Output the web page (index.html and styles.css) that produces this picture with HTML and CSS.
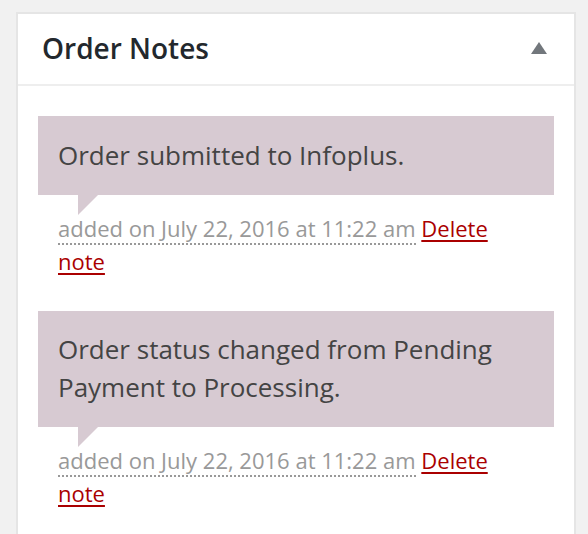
FILE: index.html
```html
<!DOCTYPE html>
<html lang="en">
<head>
<meta charset="utf-8">
<title>Order Notes</title>
<link rel="stylesheet" href="styles.css">
</head>
<body>
<div class="postbox">
  <div class="postbox-header">
    <h2 class="hndle">Order Notes</h2>
    <span class="toggle-indicator" aria-hidden="true">
      <svg width="16" height="12" viewBox="0 0 16 12"><polygon points="8,0 16,12 0,12" fill="#72777c"/></svg>
    </span>
  </div>
  <div class="inside">
    <ul class="order-notes">
      <li class="note">
        <div class="note-content"><p>Order submitted to Infoplus.</p></div>
        <p class="meta"><abbr class="exact-date">added on July 22, 2016 at 11:22 am</abbr> <a href="#" class="delete-note">Delete note</a></p>
      </li>
      <li class="note">
        <div class="note-content"><p>Order status changed from Pending Payment to Processing.</p></div>
        <p class="meta"><abbr class="exact-date">added on July 22, 2016 at 11:22 am</abbr> <a href="#" class="delete-note">Delete note</a></p>
      </li>
    </ul>
  </div>
</div>
</body>
</html>
```
FILE: styles.css
```css
html, body {
  margin: 0;
  padding: 0;
}
body {
  background: #f1f1f1;
  font-family: "Open Sans", "Liberation Sans", sans-serif;
  padding: 12px 12px 0 16px;
  height: 534px;
  box-sizing: border-box;
  overflow: hidden;
}
.postbox {
  width: 560px;
  box-sizing: border-box;
  background: #fff;
  border: 2px solid #e5e5e5;
  border-bottom: none;
  height: 522px;
  overflow: hidden;
}
.postbox-header {
  height: 70px;
  display: flex;
  align-items: center;
  justify-content: space-between;
  padding: 0 27px 0 24px;
  border-bottom: 2px solid #eeeeee;
}
.hndle {
  margin: 0;
  font-size: 28px;
  font-weight: 600;
  line-height: 39.2px;
  color: #23282d;
}
.toggle-indicator {
  display: flex;
  margin-top: -2px;
}
.inside {
  padding: 30px 20px 0;
}
.order-notes {
  list-style: none;
  margin: 0;
  padding: 0;
}
.note {
  margin: 0 0 12.5px;
}
.note-content {
  position: relative;
  background: #d7cad2;
  padding: 20.5px 20px;
}
.note-content::after {
  content: "";
  position: absolute;
  left: 40px;
  bottom: -20px;
  width: 0;
  height: 0;
  border-style: solid;
  border-width: 20px 20px 0 0;
  border-color: #d7cad2 transparent transparent transparent;
}
.note-content p {
  margin: 0;
  font-size: 26px;
  line-height: 37.5px;
  color: #444;
}
.meta {
  margin: 0;
  padding: 17.5px 20px 20px;
  font-size: 22px;
  line-height: 33px;
  color: #999;
}
.exact-date {
  text-decoration: none;
  border-bottom: 2px dotted #999;
}
.delete-note {
  color: #a00;
  text-decoration: underline;
  text-decoration-thickness: 2px;
  text-underline-offset: 3px;
}
```
